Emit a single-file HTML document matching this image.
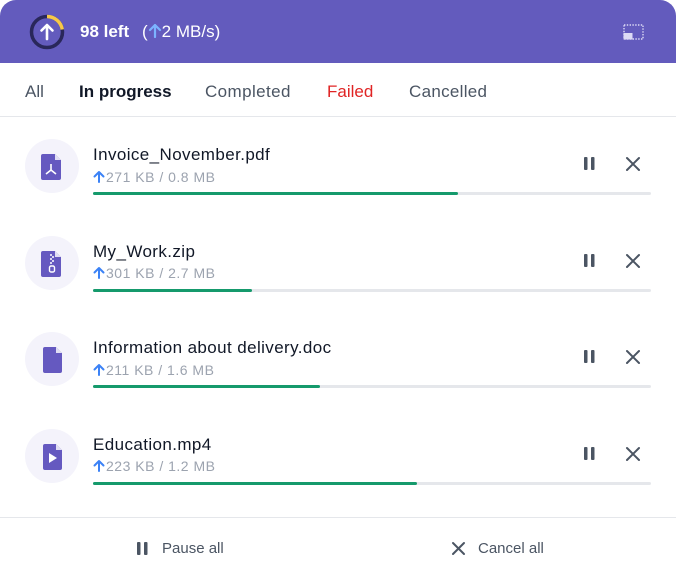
<!DOCTYPE html>
<html><head><meta charset="utf-8"><style>
*{margin:0;padding:0;box-sizing:border-box}
body{width:676px;height:581px;background:#fff;font-family:"Liberation Sans",sans-serif;position:relative;overflow:hidden}
div{white-space:nowrap}
.hdr{position:absolute;left:0;top:0;width:676px;height:63px;background:#635bbd;border-radius:16px 16px 0 0}
.abs{position:absolute}
.tab{position:absolute;top:82px;font-size:17px;color:#4b5563}
.ic{position:absolute;left:25px;width:54px;height:54px;border-radius:50%;background:#f4f3fb}
.title{position:absolute;left:93px;font-size:17px;letter-spacing:0.4px;color:#111827}
.sub{position:absolute;left:93px;font-size:14px;letter-spacing:0.5px;color:#9ca3af}
.sub svg{vertical-align:-1px;margin-right:1px}
.bar{position:absolute;left:93px;width:558px;height:3px;background:#e5e7eb;border-radius:2px}
.bar i{display:block;height:3px;background:#159a6c;border-radius:2px}
</style></head><body>
<div class="hdr">
<svg class="abs" style="left:28px;top:13px" width="38" height="38" viewBox="0 0 38 38">
<circle cx="19" cy="19" r="15.5" fill="none" stroke="#29275a" stroke-width="3.5"/>
<path d="M19 3.5 A15.5 15.5 0 0 1 34.3 16.5" fill="none" stroke="#f7c948" stroke-width="3.5"/>
<path d="M19 26 V12 M13.5 17.5 L19 12 L24.5 17.5" fill="none" stroke="#fff" stroke-width="2.6" stroke-linecap="round" stroke-linejoin="round"/>
</svg>
<div class="abs" style="left:80px;top:22px;font-size:17px;color:#fff;font-weight:bold">98 left</div>
<div class="abs" style="left:142px;top:22px;font-size:17px;color:#fff">(<svg width="14" height="15" viewBox="0 0 14 15" style="vertical-align:-1px"><path d="M7 14V2M2 7l5-5 5 5" fill="none" stroke="#7cb3ff" stroke-width="2.2" stroke-linecap="round" stroke-linejoin="round"/></svg>2 MB/s)</div>
<svg class="abs" style="left:623px;top:24px" width="21" height="16" viewBox="0 0 21 16">
<rect x="1" y="1" width="19" height="14" fill="none" stroke="#dcdaf5" stroke-width="1.4" stroke-dasharray="1.4 1.4"/>
<rect x="0.5" y="9" width="9" height="6.5" fill="#dcdaf5"/>
</svg>
</div>
<div class="tab" style="left:25px">All</div>
<div class="tab" style="left:79px;color:#111827;font-weight:bold">In progress</div>
<div class="tab" style="left:205px;letter-spacing:0.4px">Completed</div>
<div class="tab" style="left:327px;color:#e02424">Failed</div>
<div class="tab" style="left:409px;letter-spacing:0.3px">Cancelled</div>
<div class="abs" style="left:0;top:116px;width:676px;height:1px;background:#e5e7eb"></div>

<div class="ic" style="top:139px"></div>
<svg class="abs" style="left:41px;top:154px" width="22" height="26" viewBox="0 0 22 26"><path d="M2 0h12l6 6v18a2 2 0 0 1-2 2H2a2 2 0 0 1-2-2V2a2 2 0 0 1 2-2z" fill="#6559c0"/><path d="M14 0v6h6" fill="#fff" opacity=".8"/><path d="M10 10v6 M10 16 L5 20 M10 16 L15 20" stroke="#fff" stroke-width="1.6" fill="none"/></svg>
<div class="title" style="top:145px">Invoice_November.pdf</div>
<div class="sub" style="top:169px"><svg width="12" height="13" viewBox="0 0 12 13"><path d="M6 12V2M1.5 6.5L6 2l4.5 4.5" fill="none" stroke="#3b82f6" stroke-width="2" stroke-linecap="round" stroke-linejoin="round"/></svg>271 KB / 0.8 MB</div>
<div class="bar" style="top:192px"><i style="width:365px"></i></div>

<div class="ic" style="top:236px"></div>
<svg class="abs" style="left:41px;top:251px" width="22" height="26" viewBox="0 0 22 26"><path d="M2 0h12l6 6v18a2 2 0 0 1-2 2H2a2 2 0 0 1-2-2V2a2 2 0 0 1 2-2z" fill="#6559c0"/><path d="M14 0v6h6" fill="#fff" opacity=".8"/><path d="M9 4h2M11 6h2M9 8h2M11 10h2M9 12h2" stroke="#fff" stroke-width="1.4"/><rect x="8.5" y="15" width="5" height="6" rx="1.5" fill="none" stroke="#fff" stroke-width="1.4"/></svg>
<div class="title" style="top:242px">My_Work.zip</div>
<div class="sub" style="top:265px"><svg width="12" height="13" viewBox="0 0 12 13"><path d="M6 12V2M1.5 6.5L6 2l4.5 4.5" fill="none" stroke="#3b82f6" stroke-width="2" stroke-linecap="round" stroke-linejoin="round"/></svg>301 KB / 2.7 MB</div>
<div class="bar" style="top:289px"><i style="width:159px"></i></div>

<div class="ic" style="top:332px"></div>
<svg class="abs" style="left:43px;top:347px" width="20" height="26" viewBox="0 0 20 26"><path d="M2 0h11l6 6v18a2 2 0 0 1-2 2H2a2 2 0 0 1-2-2V2a2 2 0 0 1 2-2z" fill="#6559c0"/><path d="M13 0v6h6" fill="#fff" opacity=".8"/></svg>
<div class="title" style="top:338px">Information about delivery.doc</div>
<div class="sub" style="top:362px"><svg width="12" height="13" viewBox="0 0 12 13"><path d="M6 12V2M1.5 6.5L6 2l4.5 4.5" fill="none" stroke="#3b82f6" stroke-width="2" stroke-linecap="round" stroke-linejoin="round"/></svg>211 KB / 1.6 MB</div>
<div class="bar" style="top:385px"><i style="width:227px"></i></div>

<div class="ic" style="top:429px"></div>
<svg class="abs" style="left:43px;top:444px" width="20" height="26" viewBox="0 0 20 26"><path d="M2 0h11l6 6v18a2 2 0 0 1-2 2H2a2 2 0 0 1-2-2V2a2 2 0 0 1 2-2z" fill="#6559c0"/><path d="M13 0v6h6" fill="#fff" opacity=".8"/><path d="M6 9v10l8-5z" fill="#fff"/></svg>
<div class="title" style="top:435px">Education.mp4</div>
<div class="sub" style="top:458px"><svg width="12" height="13" viewBox="0 0 12 13"><path d="M6 12V2M1.5 6.5L6 2l4.5 4.5" fill="none" stroke="#3b82f6" stroke-width="2" stroke-linecap="round" stroke-linejoin="round"/></svg>223 KB / 1.2 MB</div>
<div class="bar" style="top:482px"><i style="width:324px"></i></div>

<svg class="abs" style="left:0;top:0" width="676" height="581">
<g fill="#4b5563">
<rect x="584" y="157" width="3.5" height="13" rx="1"/><rect x="591" y="157" width="3.5" height="13" rx="1"/>
<rect x="584" y="254" width="3.5" height="13" rx="1"/><rect x="591" y="254" width="3.5" height="13" rx="1"/>
<rect x="584" y="350" width="3.5" height="13" rx="1"/><rect x="591" y="350" width="3.5" height="13" rx="1"/>
<rect x="584" y="447" width="3.5" height="13" rx="1"/><rect x="591" y="447" width="3.5" height="13" rx="1"/>
<rect x="137" y="542" width="3.5" height="13" rx="1"/><rect x="144" y="542" width="3.5" height="13" rx="1"/>
</g>
<g stroke="#4b5563" stroke-width="2" stroke-linecap="round">
<path d="M627 158l12 12M639 158l-12 12"/>
<path d="M627 255l12 12M639 255l-12 12"/>
<path d="M627 351l12 12M639 351l-12 12"/>
<path d="M627 448l12 12M639 448l-12 12"/>
<path d="M453 543l11 11M464 543l-11 11"/>
</g>
</svg>
<div class="abs" style="left:0;top:517px;width:676px;height:1px;background:#e5e7eb"></div>
<div class="abs" style="left:162px;top:540px;font-size:15px;color:#4b5563">Pause all</div>
<div class="abs" style="left:478px;top:540px;font-size:15px;color:#4b5563">Cancel all</div>
</body></html>
